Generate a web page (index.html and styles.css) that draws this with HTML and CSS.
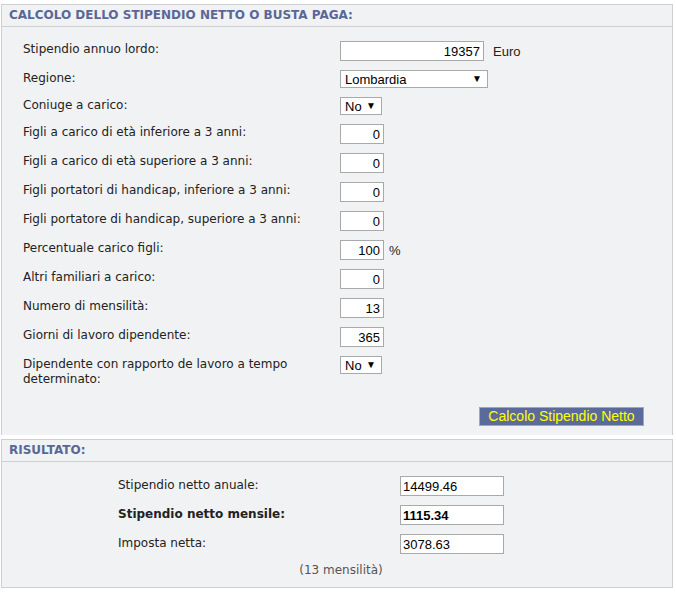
FILE: index.html
```html
<!DOCTYPE html>
<html lang="it">
<head>
	<meta charset="UTF-8">
	<title>Calcolo stipendio netto</title>
	<link rel="stylesheet" href="styles.css">
</head>
<body>
	<div class="panel calc">
		<div class="panel-head">CALCOLO DELLO STIPENDIO NETTO O BUSTA PAGA:</div>
		<div class="panel-body">
			<div class="row">
				<label>Stipendio annuo lordo:</label>
				<div class="ctl"><input class="num wide" type="text" value="19357"><span class="unit">Euro</span></div>
			</div>
			<div class="row">
				<label>Regione:</label>
				<div class="ctl"><span class="sel"><select class="big"><option>Lombardia</option></select></span></div>
			</div>
			<div class="row">
				<label>Coniuge a carico:</label>
				<div class="ctl"><span class="sel"><select class="small"><option>No</option></select></span></div>
			</div>
			<div class="row">
				<label>Figli a carico di età inferiore a 3 anni:</label>
				<div class="ctl"><input class="num" type="text" value="0"></div>
			</div>
			<div class="row">
				<label>Figli a carico di età superiore a 3 anni:</label>
				<div class="ctl"><input class="num" type="text" value="0"></div>
			</div>
			<div class="row">
				<label>Figli portatori di handicap, inferiore a 3 anni:</label>
				<div class="ctl"><input class="num" type="text" value="0"></div>
			</div>
			<div class="row">
				<label>Figli portatore di handicap, superiore a 3 anni:</label>
				<div class="ctl"><input class="num" type="text" value="0"></div>
			</div>
			<div class="row">
				<label>Percentuale carico figli:</label>
				<div class="ctl"><input class="num" type="text" value="100"><span class="unit pct">%</span></div>
			</div>
			<div class="row">
				<label>Altri familiari a carico:</label>
				<div class="ctl"><input class="num" type="text" value="0"></div>
			</div>
			<div class="row">
				<label>Numero di mensilità:</label>
				<div class="ctl"><input class="num" type="text" value="13"></div>
			</div>
			<div class="row">
				<label>Giorni di lavoro dipendente:</label>
				<div class="ctl"><input class="num" type="text" value="365"></div>
			</div>
			<div class="row">
				<label>Dipendente con rapporto de lavoro a tempo<br>determinato:</label>
				<div class="ctl"><span class="sel"><select class="small"><option>No</option></select></span></div>
			</div>
			<div class="actions">
				<button type="button">Calcolo Stipendio Netto</button>
			</div>
		</div>
	</div>

	<div class="panel result">
		<div class="panel-head">RISULTATO:</div>
		<div class="panel-body">
			<div class="row">
				<label>Stipendio netto anuale:</label>
				<div class="ctl"><input class="out" type="text" value="14499.46"></div>
			</div>
			<div class="row">
				<label class="strong">Stipendio netto mensile:</label>
				<div class="ctl"><input class="out strong" type="text" value="1115.34"></div>
			</div>
			<div class="row">
				<label>Imposta netta:</label>
				<div class="ctl"><input class="out" type="text" value="3078.63"></div>
			</div>
			<div class="note">(13 mensilità)</div>
		</div>
	</div>
</body>
</html>
```

FILE: styles.css
```css
*{padding:0;margin:0;box-sizing:border-box;}
body{
	background:#fff;
	font-family:"DejaVu Sans", Verdana, sans-serif;
	font-size:12px;
	color:#222;
}
.panel{
	width:672px;
	margin-left:1px;
	background:#f1f2f3;
	border:1px solid #cfcfcf;
}
.calc{
	margin-top:4px;
	border-bottom:none;
}
.result{
	margin-top:4px;
}
.panel-head{
	height:22px;
	line-height:21px;
	padding-left:7px;
	border-bottom:1px solid #cfcfcf;
	font-weight:bold;
	font-size:12px;
	color:#5a6797;
}
.calc .panel-body{
	padding:14px 28px 9px 21px;
}
.result .panel-body{
	padding:14px 0 9px 116px;
}
.row{
	display:flex;
	align-items:flex-start;
	margin-bottom:9px;
}
.row label{
	width:317px;
	padding-top:1px;
	line-height:15px;
}
.result .row label{
	width:282px;
	padding-top:2px;
}
.result .row:last-of-type{
	margin-bottom:0;
}
.strong{
	font-weight:bold;
}
.ctl{
	display:flex;
	align-items:center;
	font-family:"Liberation Sans", Arial, sans-serif;
	font-size:13px;
}
input{
	height:20px;
	border:1px solid #a9a9a9;
	background:#fff;
	font-family:"Liberation Sans", Arial, sans-serif;
	font-size:13px;
	color:#000;
	outline:none;
}
.num{
	width:44px;
	padding:0 3px;
	text-align:right;
}
.num.wide{
	width:144px;
}
.out{
	width:104px;
	padding:0 2px;
	text-align:left;
}
.out.strong{
	font-weight:bold;
}
.unit{
	margin-left:9px;
	color:#222;
}
.unit.pct{
	margin-left:5px;
}
.sel{
	position:relative;
	display:inline-block;
}
.sel:after{
	content:"\25BC";
	position:absolute;
	right:6px;
	top:4px;
	font-size:10px;
	line-height:10px;
	color:#000;
	pointer-events:none;
}
select{
	-webkit-appearance:none;
	appearance:none;
	display:block;
	height:18px;
	border:1px solid #a9a9a9;
	border-radius:0;
	background:#fff;
	padding:0 0 0 4px;
	font-family:"Liberation Sans", Arial, sans-serif;
	font-size:13px;
	color:#000;
	outline:none;
}
select.big{
	width:148px;
}
select.small{
	width:42px;
}
.actions{
	display:flex;
	justify-content:flex-end;
	padding-top:11px;
}
button{
	width:165px;
	height:19px;
	background:#5a6a9b;
	border:1px solid #8fa7e2;
	color:#ffff00;
	font-family:"Liberation Sans", Arial, sans-serif;
	font-size:14px;
	line-height:17px;
	cursor:pointer;
}
.note{
	margin-top:3px;
	padding-left:60px;
	line-height:15px;
	color:#555;
	width:386px;
	text-align:center;
}
```
